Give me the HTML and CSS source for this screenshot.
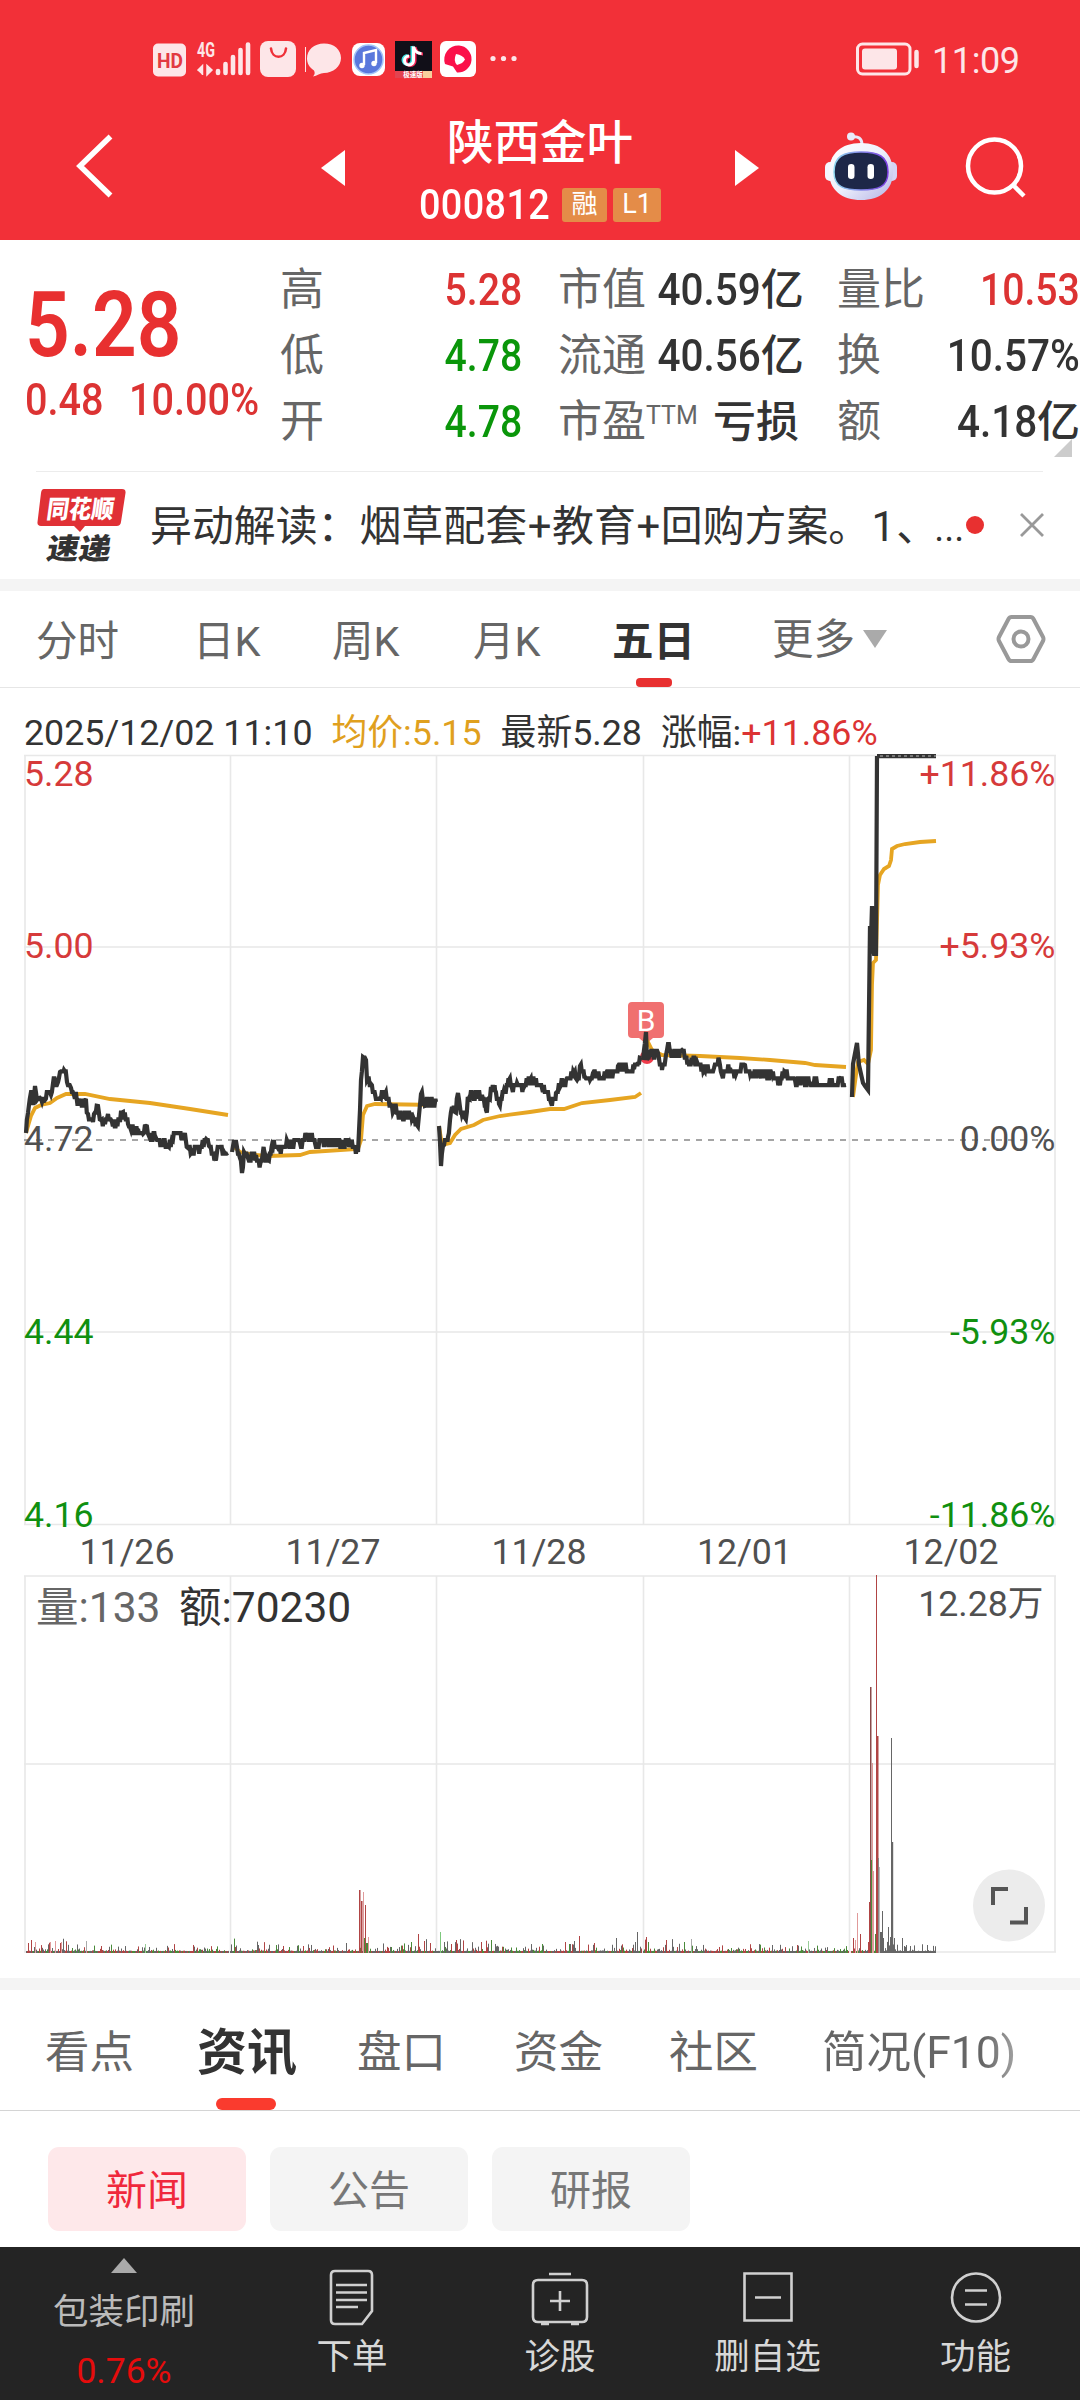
FILE: index.html
```html
<!DOCTYPE html>
<html lang="zh-CN">
<head>
<meta charset="utf-8">
<title>陕西金叶 000812</title>
<link rel="stylesheet" href="styles.css">
</head>
<body>
<header class="header">
  <div class="status">
    <svg class="status-icons" width="370" height="44" viewBox="150 38 370 44">
      <rect x="153" y="43.500" width="33" height="33" rx="5" fill="#fde6e8"/>
      <text x="157" y="68" class="hd" textLength="26" lengthAdjust="spacingAndGlyphs">HD</text>
      <text x="197" y="57" class="g4" textLength="18" lengthAdjust="spacingAndGlyphs">4G</text>
      <path d="M197.500 70.500l5-5v9.500M207 65.500v9.500l5-5z" fill="#fde6e8" stroke="#fde6e8" stroke-width="1.500"/>
      <path d="M218 71v2M225.500 64v9M233 57v16M240.500 50v23M248 44.500v28.500" stroke="#fde6e8" stroke-width="4.600" stroke-linecap="round"/>
      <rect x="260" y="41" width="36" height="36" rx="8" fill="#fde6e8"/>
      <path d="M271 48.500c1 11 14 11 15 0" fill="none" stroke="#ef3038" stroke-width="2.600" stroke-linecap="round"/>
      <path d="M305.500 47v25" stroke="#fde6e8" stroke-width="1"/>
      <path d="M324 43.500c10 0 17 6 17 14.500s-8 15-17 15c-4 0-7 3-11 3.500 2-2 2-4 1-6-4.500-3-7-7-7-12 0-8.500 7-15 17-15z" fill="#fde6e8"/>
      <rect x="352" y="43" width="33" height="33" rx="8" fill="#fff"/>
      <circle cx="368.500" cy="59.500" r="14.500" fill="#5a78dc" stroke="#a5c5f8" stroke-width="1.500"/>
      <path d="M364 65v-12l12-3v13" fill="none" stroke="#fff" stroke-width="2.400"/><circle cx="362" cy="65.500" r="2.700" fill="#fff"/><circle cx="374" cy="63.500" r="2.700" fill="#fff"/>
      <rect x="395" y="41" width="37" height="37" fill="#110f18"/>
      <g fill="none" stroke-width="3"><path d="M412 46v14a4.500 4.500 0 1 1-4.500-4.500M412 46c1 4 4 7 8 7" stroke="#3de0e0"/><path d="M415 47v14a4.500 4.500 0 1 1-4.500-4.500M415 47c1 4 4 7 8 7" stroke="#f6285a"/><path d="M413.500 46.500v14a4.500 4.500 0 1 1-4.500-4.500M413.500 46.500c1 4 4 7 8 7" stroke="#fff"/></g>
      <path d="M395 71h37V78h-37z" fill="#e34350"/><path d="M423 71h9V78h-9z" fill="#f8cf9c"/>
      <text x="413" y="77" text-anchor="middle" class="tiny">极速版</text>
      <rect x="440" y="41" width="36" height="36" rx="6" fill="#fff"/>
      <path d="M459 45.500a13.500 13.500 0 1 1-2 27l-4-6-8-2.500a14 14 0 0 1 14-18.500z" fill="#fb1049"/><path d="M456 54q7 1 9 5.500-2 4-8 5.500-4-4-1-11z" fill="#fff"/>
      <g fill="#fde6e8"><circle cx="493" cy="58.500" r="2.600"/><circle cx="503.500" cy="58.500" r="2.600"/><circle cx="514" cy="58.500" r="2.600"/></g>
    </svg>
    <div class="status-right">
      <svg width="66" height="36" viewBox="0 0 66 36"><rect x="2.500" y="3" width="52.500" height="30" rx="5" fill="none" stroke="#fde6e8" stroke-width="3"/><rect x="7" y="7.500" width="35" height="21" rx="3" fill="#fde6e8"/><path d="M61.500 11v14" stroke="#fde6e8" stroke-width="4.500" stroke-linecap="round"/></svg>
      <span class="clock">11:09</span>
    </div>
  </div>
  <div class="nav">
    <svg class="nav-back" width="40" height="66" viewBox="0 0 40 66"><path d="M34.500 3.500L4 33l30.500 29.500" fill="none" stroke="#fff" stroke-width="5.500"/></svg>
    <svg class="nav-prev" width="24" height="36"><path d="M0 18L24 0v36z" fill="#fff"/></svg>
    <div class="title">
      <div class="name">陕西金叶</div>
      <div class="code"><span class="code-num">000812</span><span class="badge">融</span><span class="badge level">L1</span></div>
    </div>
    <svg class="nav-next" width="24" height="36"><path d="M24 18L0 0v36z" fill="#fff"/></svg>
    <svg class="robot" width="74" height="70" viewBox="0 0 74 70">
      <defs><linearGradient id="shell" x1="0" y1="0" x2="1" y2="1"><stop offset="0" stop-color="#fff"/><stop offset=".5" stop-color="#eef0fc"/><stop offset="1" stop-color="#b3b3e6"/></linearGradient><linearGradient id="rim" x1="0" y1="0" x2="1" y2="0"><stop offset="0" stop-color="#8fd8f0"/><stop offset="1" stop-color="#7a3ae0"/></linearGradient></defs>
      <path d="M28 7c6-1 10 1 10 8" fill="none" stroke="#e8e8fa" stroke-width="3"/><circle cx="27" cy="6.500" r="4" fill="#e9ebfb"/>
      <rect x="1" y="32" width="12" height="19" rx="5" fill="#f4f5ff"/><rect x="61" y="32" width="12" height="19" rx="5" fill="#d5d4f5"/>
      <path d="M37 13c20 0 32 11 32 29S56 70 37 70 5 60 5 42 17 13 37 13z" fill="url(#shell)"/>
      <path d="M37 22c17 0 27 4 27 20 0 15-10 18-27 18S10 57 10 42c0-16 10-20 27-20z" fill="#1d2748" stroke="url(#rim)" stroke-width="1.500"/>
      <rect x="24" y="34" width="6.500" height="15" rx="3.200" fill="#fff"/><rect x="43.500" y="34" width="6.500" height="15" rx="3.200" fill="#fff"/>
    </svg>
    <svg class="search" width="62" height="64" viewBox="0 0 62 64"><circle cx="29.500" cy="30" r="26.500" fill="none" stroke="#fff" stroke-width="4.500"/><path d="M48 49l11 11" stroke="#fff" stroke-width="4.500"/></svg>
  </div>
</header>

<section class="quote">
  <div class="last">
    <div class="price din">5.28</div>
    <div class="change"><span class="din">0.48</span><span class="din">10.00%</span></div>
  </div>
  <dl class="stats col1">
    <div><dt>高</dt><dd class="up din">5.28</dd></div>
    <div><dt>低</dt><dd class="down din">4.78</dd></div>
    <div><dt>开</dt><dd class="down din">4.78</dd></div>
  </dl>
  <dl class="stats col2">
    <div><dt>市值</dt><dd><span class="din">40.59</span>亿</dd></div>
    <div><dt>流通</dt><dd><span class="din">40.56</span>亿</dd></div>
    <div><dt>市盈<sup>TTM</sup></dt><dd>亏损</dd></div>
  </dl>
  <dl class="stats col3">
    <div><dt>量比</dt><dd class="up din">10.53</dd></div>
    <div><dt>换</dt><dd class="din wide">10.57%</dd></div>
    <div><dt>额</dt><dd><span class="din">4.18</span>亿</dd></div>
  </dl>
  <i class="corner"></i>
</section>

<section class="news">
  <svg class="logo" width="92" height="90" viewBox="0 0 92 90"><path d="M8 1h78q4 0 3.500 4L85 34q-.5 4-4.500 4H49l-5 6-6-6H5q-4 0-3.500-4L5 5q.5-4 3-4z" fill="#e03035"/><text x="10" y="30.500" class="logo-top" transform="skewX(-8) translate(4 0)" textLength="67" lengthAdjust="spacingAndGlyphs">同花顺</text><text x="12" y="71" class="logo-bottom" transform="skewX(-10) translate(10 0)" textLength="64" lengthAdjust="spacingAndGlyphs">速递</text></svg>
  <p class="news-text">异动解读：烟草配套<b>+</b>教育<b>+</b>回购方案。<b class="one">1</b>、<em>...</em></p>
  <i class="unread"></i>
  <svg class="close" width="26" height="26"><path d="M2 2l22 22M24 2L2 24" stroke="#999" stroke-width="2.800"/></svg>
</section>

<nav class="periods">
  <span>分时</span><span>日K</span><span>周K</span><span>月K</span><span class="active">五日</span><span class="more">更多<i></i></span>
  <svg width="52" height="50" viewBox="0 0 52 50"><path d="M16.500 3h19q2 0 3 2l9.500 18q1 2 0 4L38.500 45q-1 2-3 2h-19q-2 0-3-2L4 27q-1-2 0-4l9.500-18q1-2 3-2z" fill="none" stroke="#999" stroke-width="4"/><circle cx="26" cy="25" r="7.500" fill="none" stroke="#999" stroke-width="4"/></svg>
</nav>

<section class="chart">
  <div class="readout"><span>2025/12/02 11:10</span><span class="avg">均价:5.15</span><span>最新5.28</span><span>涨幅:<b>+11.86%</b></span></div>
  <svg class="plot" width="1080" height="1224" viewBox="0 754 1080 1224">
    <g class="grid">
      <path d="M24 755.500h1032M24 947h1032M24 1332h1032M24 1524.500h1032M24 1576h1032M24 1764h1032M24 1952h1032"/>
      <path d="M25 755v770M230.500 755v770M436.500 755v770M643.500 755v770M849.500 755v770M1055 755v770M25 1576v376M230.500 1576v376M436.500 1576v376M643.500 1576v376M849.500 1576v376M1055 1576v376"/>
    </g>
    <path d="M24 1140h1032" class="base"/>
    <g class="axis">
      <text x="24" y="786" class="up">5.28</text><text x="24" y="957.500" class="up">5.00</text><text x="24" y="1151">4.72</text><text x="24" y="1343.500" class="down">4.44</text><text x="24" y="1526.500" class="down">4.16</text>
      <g text-anchor="end"><text x="1055.500" y="786" class="up">+11.86%</text><text x="1055.500" y="957.500" class="up">+5.93%</text><text x="1055.500" y="1151">0.00%</text><text x="1055.500" y="1343.500" class="down">-5.93%</text><text x="1055.500" y="1526.500" class="down">-11.86%</text></g>
      <g text-anchor="middle"><text x="127" y="1563.500">11/26</text><text x="333" y="1563.500">11/27</text><text x="539" y="1563.500">11/28</text><text x="744.500" y="1563.500">12/01</text><text x="951" y="1563.500">12/02</text></g>
      <text x="1043.500" y="1616" text-anchor="end">12.28万</text>
    </g>
    <circle cx="647" cy="1057" r="7" fill="#ef3b4a"/>
    <path d="M632 1002h28q4 0 4 4v28q0 4-4 4h-7l-7 6-7-6h-7q-4 0-4-4v-28q0-4 4-4z" fill="#f07070"/>
    <text x="646" y="1031" text-anchor="middle" class="mark">B</text>
    <g id="averages"></g>
    <g id="prices"></g>
    <path d="M877 756h59" stroke="#333" stroke-width="4.500"/><path d="M880 756h56" stroke="#777" stroke-width="2" stroke-dasharray="3 3"/>
    <g id="volumes"></g>
    <text x="36" y="1622" class="vol"><tspan fill="#666">量:133</tspan><tspan x="179">额:70230</tspan></text>
    <circle cx="1009" cy="1905.500" r="36" fill="#ececec"/>
    <path d="M993 1905v-16h15M1026 1907v15.500h-16" fill="none" stroke="#555" stroke-width="4"/>
  </svg>
</section>

<nav class="sections">
  <span>看点</span><span class="active">资讯</span><span>盘口</span><span>资金</span><span>社区</span><span class="fade">简况(F10)</span>
</nav>
<div class="chips"><span class="chip on">新闻</span><span class="chip">公告</span><span class="chip">研报</span></div>

<footer class="actions">
  <div class="sector"><i></i><span>包装印刷</span><b>0.76%</b></div>
  <div class="action"><svg width="60" height="58" viewBox="0 0 60 58"><path d="M13 3h33q4 0 4 4v36L40 56H13q-4 0-4-4V7q0-4 4-4zM14 17h31M14 24.500h31M14 32h31M14 39h22"/></svg><span>下单</span></div>
  <div class="action"><svg width="60" height="58" viewBox="0 0 60 58"><path d="M8 12h44q5 0 5 5v32q0 5-5 5H8q-5 0-5-5V17q0-5 5-5zM19 6h22M30 23v20M20 33h20"/><path d="M11 56h8M41 56h8"/></svg><span>诊股</span></div>
  <div class="action"><svg width="60" height="58" viewBox="0 0 60 58"><path d="M6.500 5.500h47v47h-47zM17 29.500h26"/></svg><span>删自选</span></div>
  <div class="action"><svg width="60" height="58" viewBox="0 0 60 58"><circle cx="30" cy="29.500" r="24"/><path d="M19 22.500h22M19 36.500h22"/></svg><span>功能</span></div>
</footer>
<script src="chart.js"></script>
</body>
</html>
```
FILE: styles.css
```css
* { box-sizing: border-box; margin: 0; padding: 0; }
body { width: 1080px; height: 2400px; overflow: hidden; background: #fff; color: #333; font-family: Roboto, "Noto Sans CJK SC", sans-serif; display: flex; flex-direction: column; }
svg { display: block; flex: none; }
i, em { font-style: normal; }
.up { color: #dc3333; fill: #d63a3a; }
.down { color: #0a960a; fill: #109010; }
.din { font-family: Roboto, sans-serif; font-weight: 500; }

.header { height: 240px; background: #f23038; color: #fff; }
.status { height: 120px; padding: 38px 0 0 150px; display: flex; }
.status-right { margin-left: 335px; margin-top: 3px; display: flex; gap: 11px; height: 36px; align-items: center; }
.clock { font-size: 36px; line-height: 36px; color: #fde6e8; padding-top: 4px; letter-spacing: -.400px; }
.hd { font: 700 21px Roboto; fill: #e23a42; }
.g4 { font: 700 20px Roboto; fill: #fde6e8; }
.tiny { font: 700 6.500px "Noto Sans CJK SC"; fill: #fff; }
.nav { height: 120px; display: flex; align-items: flex-start; }
.nav-back { margin: 13px 0 0 76px; }
.nav-prev { margin: 30px 0 0 205px; }
.nav-next { margin: 30px 0 0 0; }
.title { width: 390px; text-align: center; }
.name { font-size: 46.500px; line-height: 50px; font-weight: 500; margin-top: -2px; }
.code { display: flex; align-items: center; padding-left: 74px; height: 40px; margin-top: 17px; }
.code-num { font-size: 42px; font-weight: 500; width: 143px; text-align: left; letter-spacing: .400px; line-height: 40px; transform: scaleX(.9); transform-origin: 0 50%; }
.badge { width: 45px; height: 34px; line-height: 33px; font-size: 26px; background: #e48c48; border-radius: 3px; }
.level { width: 48px; margin-left: 6px; font-size: 27px; }
.robot { margin: 10px 0 0 65px; }
.search { margin: 16px 0 0 67px; }

.quote { height: 231px; position: relative; display: flex; padding-top: 16px; }
.last { width: 280px; padding-left: 25px; color: #e83030; }
.price { font-size: 90px; line-height: 110px; margin-top: 15px; transform: scaleX(.87); transform-origin: 0 0; font-weight: 600; }
.change { display: flex; font-size: 44px; line-height: 50px; margin-top: -6px; color: #dc3333; }
.change span { width: 104px; transform: scaleX(.9); transform-origin: 0 0; white-space: nowrap; }
.stats > div { display: flex; justify-content: space-between; height: 66px; align-items: center; font-size: 43px; line-height: 66px; white-space: nowrap; padding-top: 1px; }
.stats dt { color: #666; font-size: 44px; }
.stats dd { font-weight: 500; }
.stats .din { display: inline-block; font-size: 45px; transform: scaleX(.87); transform-origin: 100% 50%; }
.col2 .din, .col3 dd > .din, .stats .wide { transform: scaleX(.9); }
.col1 { width: 242px; }
.col2 { width: 241px; margin-left: 36px; }
.col3 { width: 243px; margin-left: 38px; }
.stats sup { font-size: 25px; line-height: 1px; vertical-align: 13px; }
.corner { position: absolute; left: 1054px; top: 199px; border: 9px solid transparent; border-right-color: #ccc; border-bottom-color: #ccc; }

.news { height: 120px; border-bottom: 12px solid #f4f4f4; display: flex; padding-left: 36px; background: linear-gradient(#ececec, #ececec) 36px 0 / 1007px 1px no-repeat; }
.logo { margin-top: 17px; }
.logo-top { font: 900 25px "Noto Sans CJK SC"; fill: #fff; }
.logo-bottom { font: 900 29px "Noto Sans CJK SC"; fill: #333; }
.news-text { width: 815px; margin-left: 22px; padding-top: 26px; font-size: 41.900px; line-height: 60px; white-space: nowrap; }
.news-text b { font-weight: 400; display: inline-block; width: 25px; text-align: center; }
.news-text .one { width: 26px; }
.news-text em { margin-left: -4px; font-size: 38px; }
.unread { width: 18px; height: 18px; border-radius: 50%; background: #e83030; margin: 45px 35px 0 1px; }
.close { margin-top: 41px; }

.periods { height: 97px; border-bottom: 1px solid #e6e6e6; display: grid; grid-template-rows: 96px; grid-template-columns: 157px 139px 141px 139px 160px 223px 60px; padding-left: 36px; font-size: 41.500px; line-height: 101px; color: #666; }
.periods .active { color: #333; font-weight: 700; position: relative; }
.periods .active::after { content: ""; position: absolute; left: 24px; bottom: 0; width: 36px; height: 9px; border-radius: 4px; background: #e83030; }
.more { display: flex; align-items: center; gap: 8px; }
.more i { border: 12px solid transparent; border-top: 18px solid #aaa; border-bottom: 0; }
.periods svg { margin-top: 23px; }

.chart { height: 1302px; border-bottom: 12px solid #f4f4f4; }
.readout { height: 66px; padding: 21px 0 0 24px; display: flex; gap: 19px; font-size: 35.800px; line-height: 48px; white-space: nowrap; }
.readout .avg { color: #e0a01e; }
.readout b { font-weight: 400; color: #dc3333; }
.grid { fill: none; stroke: #e8e8e8; stroke-width: 1.600; }
.base { stroke: #888; stroke-width: 1.600; stroke-dasharray: 6 6; }
.axis { font-size: 35.700px; fill: #505050; }
.mark { font-size: 30px; fill: #fff; }
.vol { font-size: 42.500px; fill: #333; }
.price-line { fill: none; stroke: #333; stroke-width: 4.200; }
.avg-line { fill: none; stroke: #e6a522; stroke-width: 3.800; }

.sections { height: 121px; border-bottom: 1px solid #d4d4d4; display: grid; grid-template-rows: 120px; grid-template-columns: 152px 160px 157px 155px 153px 230px; padding-left: 45px; font-size: 44.500px; line-height: 126px; color: #666; white-space: nowrap; }
.sections .active { color: #333; font-size: 50px; font-weight: 700; position: relative; }
.sections .active::after { content: ""; position: absolute; left: 19px; bottom: 0; width: 60px; height: 12px; border-radius: 6px; background: #fa3b2e; }
.fade { background: linear-gradient(90deg, #666 70%, #aaa 86%); background-clip: text; color: transparent; }
.chips { height: 136px; padding: 36px 0 0 48px; display: flex; gap: 24px; }
.chip { width: 198px; height: 84px; border-radius: 11px; background: #f4f4f4; color: #777; text-align: center; font-size: 41px; line-height: 88px; }
.chip.on { background: #fee8ea; color: #f0283c; }

.actions { height: 153px; background: #242424; display: grid; grid-template-columns: 248px 208px 208px 207px 209px; color: #d8d8d8; font-size: 35.500px; }
.sector { display: flex; flex-direction: column; align-items: center; padding-top: 11px; color: #bbb; }
.sector i { border: 13px solid transparent; border-bottom: 15px solid #aaa; border-top: 0; }
.sector span { line-height: 50px; margin-top: 14px; }
.sector b { color: #e60c0c; font-weight: 400; line-height: 44px; font-size: 35.500px; margin-top: 12px; }
.action { display: flex; flex-direction: column; align-items: center; padding-top: 21px; }
.action svg { fill: none; stroke: #d0d0d0; stroke-width: 2.600; }
.action span { line-height: 50px; margin-top: 6px; }
```
FILE: chart.js
```js
const NS = "http://www.w3.org/2000/svg";
const TICK = 6.86;
const BASE = 1140;
let seed = 11;
const rand = () => (seed = (seed * 16807) % 2147483647) / 2147483647;

const prices = [
  "26,1133 28,1113 31,1092 33,1105 35,1086 37,1100 40,1098 42,1102 45,1100 48,1092 51,1095 55,1080 58,1082 60,1072 64,1070 67,1082 71,1088 74,1095 79,1101 85,1101 88,1114 93,1122 94,1114 98,1106 101,1120 105,1124 108,1114 112,1122 120,1122 123,1112 128,1124 131,1130 138,1129 143,1134 146,1126 149,1136 156,1138 162,1143 168,1146 172,1139 177,1133 184,1136 188,1148 192,1152 200,1148 206,1139 209,1146 215,1158 219,1147 224,1152 228,1153",
  "232,1152 234,1140 237,1147 240,1158 242,1173 244,1152 248,1158 256,1155 260,1165 264,1150 268,1160 272,1145 278,1148 285,1147 288,1143 300,1143 306,1135 310,1137 315,1143 350,1144 355,1147 358,1152 360,1110 361,1080 363,1057 366,1060 367,1080 371,1084 375,1094 380,1098 385,1094 391,1105 394,1110 398,1113 402,1116 413,1117 417,1125 419,1115 421,1094 425,1106 430,1100 436,1102",
  "439,1126 441,1166 444,1145 448,1137 450,1120 452,1107 455,1112 458,1093 462,1115 465,1118 469,1098 473,1093 482,1095 486,1110 489,1098 491,1087 495,1090 499,1104 504,1090 509,1080 512,1088 517,1083 524,1087 530,1080 535,1083 542,1088 548,1092 551,1103 556,1093 560,1087 566,1080 574,1073 577,1080 580,1066 585,1077 590,1080 593,1073 602,1078 606,1073 613,1073 618,1066 624,1066 628,1071 634,1069 638,1062 641,1058",
  "643,1060 646,1032 647,1060 650,1052 658,1053 662,1070 666,1055 668,1044 672,1055 682,1050 688,1060 697,1062 704,1070 714,1068 719,1060 722,1075 730,1068 736,1074 745,1065 750,1074 760,1075 772,1075 779,1082 785,1072 795,1080 810,1082 820,1085 835,1085 840,1078 846,1085"
];
const lastDay = "852,1097 853,1064 857,1043 859,1065 863,1083 865,1086 868,1090 870,926 871,940 872,906 873,948 874,954 876,954 877,756";
const averages = [
  "26,1133 31,1116 35,1108 41,1105 50,1103 57,1098 66,1094 85,1094 110,1099 150,1103 190,1109 228,1115",
  "233,1146 240,1152 255,1155 268,1156 300,1155 310,1152 358,1149 361,1140 363,1115 367,1106 375,1104 436,1105",
  "439,1126 442,1145 450,1143 455,1135 461,1129 474,1125 483,1120 500,1116 530,1112 550,1109 564,1109 582,1103 610,1100 635,1097 641,1093",
  "647,1040 652,1050 662,1055 700,1056 740,1058 770,1060 805,1063 815,1065 846,1067",
  "853,1097 856,1075 858,1062 864,1060 868,1064 871,1050 872,985 873,963 876,960 878,885 880,875 884,869 889,866 891,860 892,849 897,846 905,844 920,842 936,841"
];

function line(parent, points, cls) {
  const el = document.createElementNS(NS, "polyline");
  el.setAttribute("points", points);
  el.setAttribute("class", cls);
  document.getElementById(parent).appendChild(el);
}

// Fills in the minutes between key points and snaps each one to a price tick.
function minutes(keys) {
  const p = keys.split(" ").map(s => s.split(",").map(Number));
  const out = [];
  for (let i = 0; i < p.length - 1; i++) {
    const [x0, y0] = p[i], [x1, y1] = p[i + 1];
    out.push([x0, y0]);
    for (let x = x0 + 0.9; x < x1 - 0.4; x += 0.9) {
      const y = y0 + (y1 - y0) * (x - x0) / (x1 - x0) + (rand() - 0.5) * 8;
      out.push([x.toFixed(1), (BASE - Math.round((BASE - y) / TICK) * TICK).toFixed(1)]);
    }
  }
  out.push(p[p.length - 1]);
  return out.join(" ");
}

averages.forEach(a => line("averages", a, "avg-line"));
prices.forEach(k => line("prices", minutes(k), "price-line"));
line("prices", lastDay, "price-line");

const RED = "#b04444", PINK = "#e09a9a", GREEN = "#4a8a3a", GRAY = "#666";
function bar(x, top, color, width = 1) {
  const el = document.createElementNS(NS, "rect");
  el.setAttribute("x", x);
  el.setAttribute("y", top);
  el.setAttribute("width", width);
  el.setAttribute("height", 1953 - top);
  el.setAttribute("fill", color);
  document.getElementById("volumes").appendChild(el);
}
for (let x = 26; x < 936; x++) {
  if (x === 229 || x === 642 || x === 849 || x === 850) continue;
  const r = rand();
  const day = (x - 25) % 206;
  const busy = day < 45 || (x > 365 && x < 500);
  const h = 2 + Math.pow(rand(), 5) * (busy ? 13 : 7);
  bar(x, 1953 - h, x > 878 ? GRAY : r < .3 ? RED : r < .55 ? GREEN : GRAY);
}
[
  [28, 1943, RED], [31, 1940, RED], [35, 1942, PINK], [50, 1942, PINK], [55, 1941, PINK], [61, 1942, PINK], [86, 1941, "#aaa"], [145, 1944, "#9c9"],
  [234, 1945, GREEN], [258, 1945, GRAY], [303, 1946, RED], [346, 1943, GRAY],
  [359, 1890, RED, 1.500], [361, 1901, RED, 1.500], [363, 1892, PINK], [365, 1905, RED], [364, 1938, GREEN], [366, 1943, GREEN, 2], [368, 1937, PINK],
  [411, 1942, GREEN], [418, 1934, RED], [424, 1941, RED], [430, 1943, RED], [440, 1932, "#7dc87d"], [444, 1942, GRAY], [456, 1940, RED], [481, 1942, RED], [491, 1940, GREEN],
  [542, 1944, GREEN], [565, 1942, RED], [574, 1941, GRAY], [579, 1936, RED], [594, 1943, RED], [616, 1938, GRAY], [637, 1932, GRAY], [635, 1942, GRAY],
  [646, 1937, RED], [648, 1942, GREEN], [666, 1940, RED], [684, 1942, GREEN], [691, 1939, "#aaa"], [772, 1945, GRAY], [797, 1945, RED], [808, 1941, "#9c9"],
  [853, 1938, RED], [855, 1940, PINK], [857, 1913, PINK], [860, 1934, RED], [868, 1942, RED], [869, 1902, RED], [870, 1687, "#8a4a4a", 1.500], [871, 1860, GREEN, 1], [872, 1763, PINK], [873, 1871, PINK], [875, 1934, GREEN, 1],
  [876, 1575, RED, 1], [877, 1736, RED, 1.500], [878, 1858, "#888"], [879, 1867, "#bbb"], [880, 1932, GRAY, 2], [882, 1911, GRAY], [883, 1938, GRAY], [888, 1927, GRAY], [890, 1937, GRAY],
  [891, 1738, GRAY], [892, 1842, GRAY, 1.200], [894, 1938, GRAY], [902, 1938, GRAY], [904, 1946, GRAY], [910, 1946, GRAY], [927, 1945, GRAY]
].forEach(b => bar(...b));
```
